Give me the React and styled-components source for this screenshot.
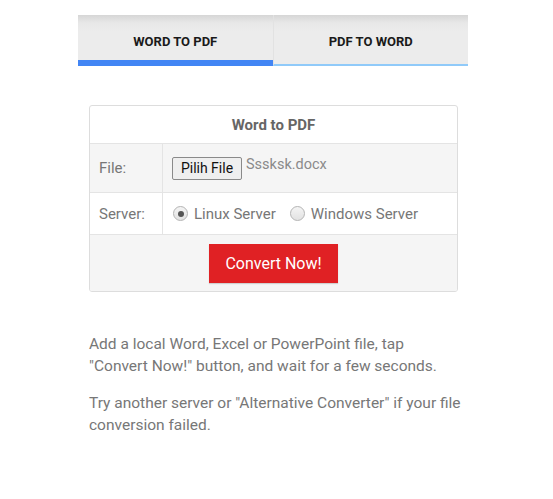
import React from "react";
import styled, { createGlobalStyle } from "styled-components";

const GlobalStyle = createGlobalStyle`
  body {
    margin: 0;
    background: #ffffff;
    font-family: Roboto, "Liberation Sans", Arial, sans-serif;
  }
`;

const Page = styled.div`
  width: 390px;
  margin-left: 78px;
  padding-top: 15px;
`;

const TabBar = styled.div`
  display: flex;
  background: linear-gradient(to bottom, #d6d6d6 0px, #e8e8e8 8px, #ececec 16px);
`;

const Tab = styled.div`
  flex: 1;
  height: 51px;
  box-sizing: border-box;
  padding-top: 19px;
  text-align: center;
  font-size: 13px;
  font-weight: 700;
  color: #1a1a1a;
  border-bottom: ${(p) => (p.active ? "6px solid #4285f4" : "2px solid #90caf9")};
  & + & {
    border-left: 1px solid #e2e2e2;
  }
`;

const Content = styled.div`
  padding: 39px 10px 0 11px;
`;

const Card = styled.div`
  border: 1px solid #dddddd;
  border-radius: 3px;
  overflow: hidden;
  color: #777777;
  font-size: 15px;
`;

const CardTitle = styled.div`
  height: 37px;
  display: flex;
  align-items: center;
  justify-content: center;
  font-weight: 700;
  color: #666666;
  font-size: 15px;
  border-bottom: 1px solid #e4e4e4;
`;

const Row = styled.div`
  display: grid;
  grid-template-columns: 73px 1fr;
  height: ${(p) => p.h}px;
  background: ${(p) => (p.shaded ? "#f5f5f5" : "#ffffff")};
  border-bottom: 1px solid #e4e4e4;
`;

const Label = styled.div`
  display: flex;
  align-items: center;
  padding-left: 9px;
  border-right: 1px solid #e4e4e4;
`;

const Field = styled.div`
  display: flex;
  align-items: center;
  padding-left: 9px;
  gap: 4px;
`;

const FileButton = styled.button`
  width: 70px;
  height: 23px;
  padding: 0;
  font-family: Roboto, "Liberation Sans", Arial, sans-serif;
  font-size: 14px;
  color: #111111;
  background: #efefef;
  border: 1px solid #8a8a8a;
  border-radius: 2px;
`;

const FileName = styled.span`
  font-size: 14.5px;
  color: #8a8a8a;
  margin-top: -8px;
`;

const RadioOption = styled.label`
  display: flex;
  align-items: center;
  gap: 6px;
  margin-right: 9px;
  color: #777777;
`;

const RadioDot = styled.span`
  width: 15px;
  height: 15px;
  margin-left: 1px;
  box-sizing: border-box;
  border-radius: 50%;
  border: 1px solid #b4b4b4;
  background: linear-gradient(to bottom, #f4f4f4, #e2e2e2);
  display: flex;
  align-items: center;
  justify-content: center;
  &::after {
    content: "";
    width: 6px;
    height: 6px;
    border-radius: 50%;
    background: ${(p) => (p.checked ? "#555555" : "transparent")};
  }
`;

const ActionRow = styled.div`
  background: #f5f5f5;
  display: flex;
  justify-content: center;
  padding: 9px 0 8px;
`;

const ConvertButton = styled.button`
  width: 129px;
  height: 39px;
  background: #e02124;
  color: #ffffff;
  border: none;
  font-family: Roboto, "Liberation Sans", Arial, sans-serif;
  font-size: 16px;
  box-shadow: 0 1px 1px rgba(0, 0, 0, 0.15);
`;

const Note = styled.p`
  margin: ${(p) => (p.first ? "41px" : "15px")} -5px 0 0;
  font-size: 15.5px;
  line-height: 22px;
  color: #777777;
`;

export default function App() {
  return (
    <>
      <GlobalStyle />
      <Page>
        <TabBar>
          <Tab active>WORD TO PDF</Tab>
          <Tab>PDF TO WORD</Tab>
        </TabBar>
        <Content>
          <Card>
            <CardTitle>Word to PDF</CardTitle>
            <Row h={48} shaded>
              <Label>File:</Label>
              <Field>
                <FileButton>Pilih File</FileButton>
                <FileName>Sssksk.docx</FileName>
              </Field>
            </Row>
            <Row h={41}>
              <Label>Server:</Label>
              <Field>
                <RadioOption>
                  <RadioDot checked />
                  Linux Server
                </RadioOption>
                <RadioOption>
                  <RadioDot />
                  Windows Server
                </RadioOption>
              </Field>
            </Row>
            <ActionRow>
              <ConvertButton>Convert Now!</ConvertButton>
            </ActionRow>
          </Card>
          <Note first>
            Add a local Word, Excel or PowerPoint file, tap "Convert Now!"
            button, and wait for a few seconds.
          </Note>
          <Note>
            Try another server or "Alternative Converter" if your file
            conversion failed.
          </Note>
        </Content>
      </Page>
    </>
  );
}
